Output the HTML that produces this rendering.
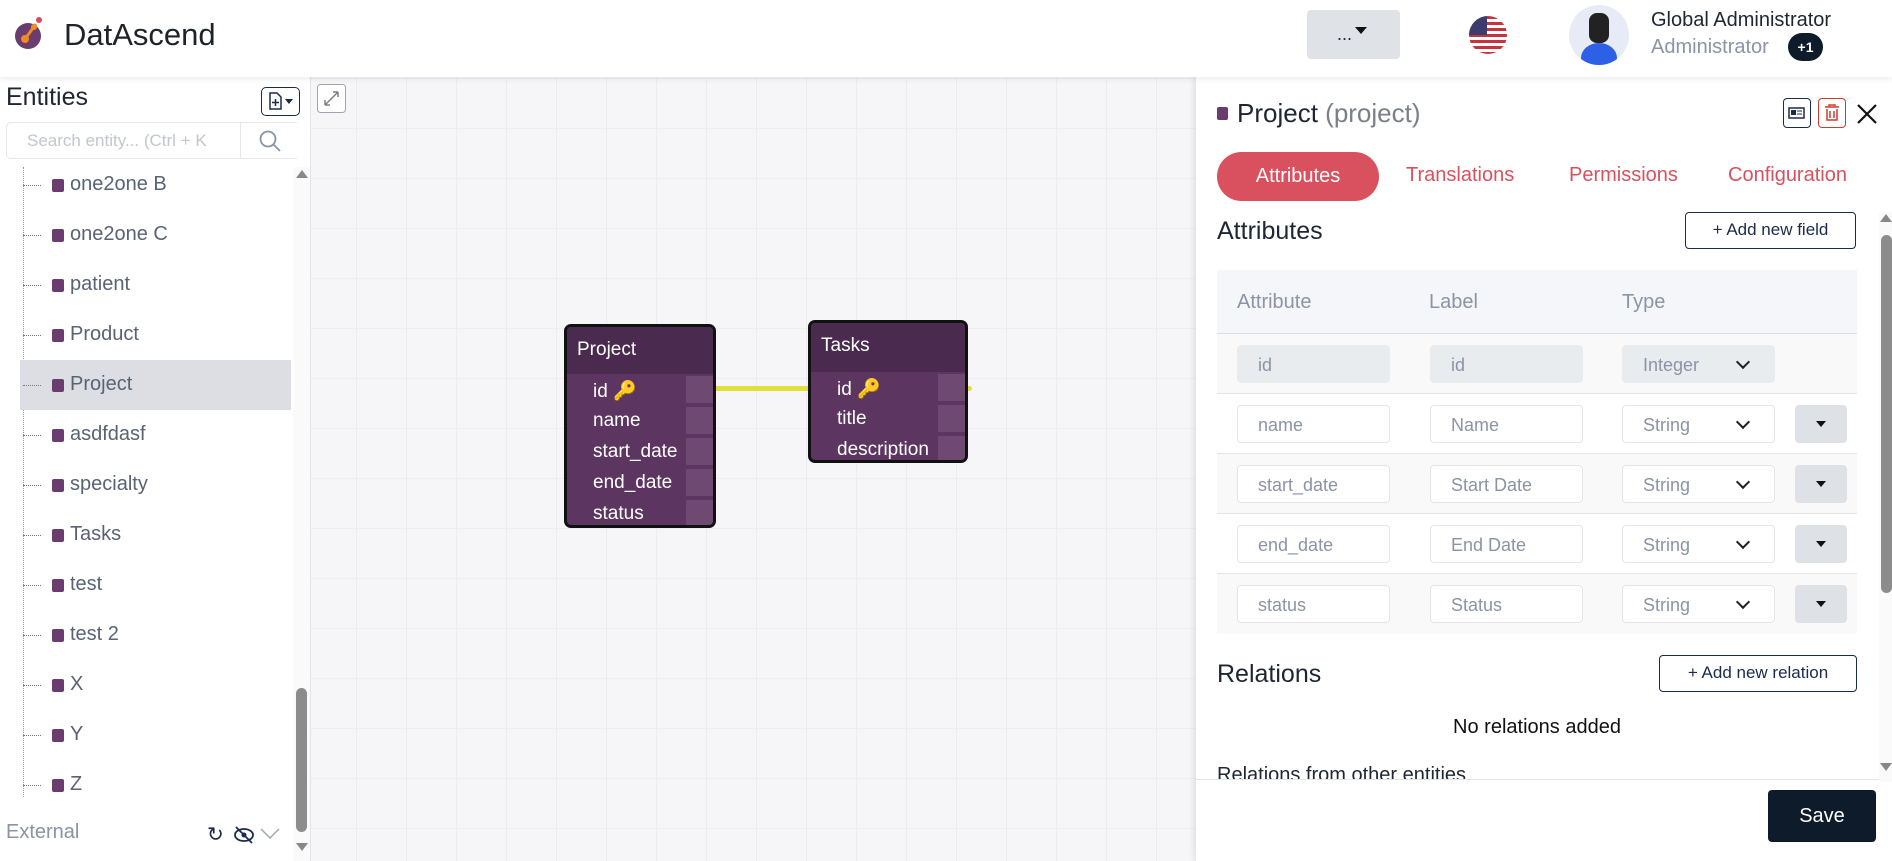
<!DOCTYPE html>
<html><head><meta charset="utf-8"><style>
*{box-sizing:border-box;margin:0;padding:0}
html,body{width:1892px;height:861px;overflow:hidden}
body{font-family:"Liberation Sans",sans-serif;background:#fff;position:relative;color:#1e2533}
.a{position:absolute}
.hdr{left:0;top:0;width:1892px;height:77px;background:#fff;box-shadow:0 2px 6px rgba(0,0,0,.08);z-index:5}
.canvas{left:311px;top:77px;width:885px;height:784px;background-color:#f6f6f9;background-image:linear-gradient(#efedf1 1px,transparent 1px),linear-gradient(90deg,#ececf0 1px,transparent 1px);background-size:50px 50px;background-position:45px 1px}
.side{left:0;top:77px;width:311px;height:784px;background:#fff;border-right:1px solid #e4e4e8;overflow:hidden}
.item{position:absolute;left:0;width:291px;height:50px;font-size:20px;color:#5a6374}
.item .sq{position:absolute;left:52px;top:19px;width:12px;height:13px;background:#6b3d6e;border-radius:2px}
.item .t{position:absolute;left:70px;top:13px}
.item .h{position:absolute;left:23px;top:25px;width:18px;border-top:1px dotted #777}
.node{position:absolute;background:#5c3560;border:3px solid #111;border-radius:7px;overflow:hidden;color:#fff;font-size:19px}
.node .hd{background:#4a2a4e;height:47px;padding:12px 0 0 10px}
.node .r{position:relative;height:31px;padding:5px 0 0 26px}
.node .c{position:absolute;right:0;top:2px;width:27px;height:27px;background:#6e4a72}
.panel{left:1196px;top:77px;width:696px;height:784px;background:#fff;box-shadow:-2px 0 6px rgba(0,0,0,.1)}
.tab{position:absolute;top:164px;font-size:20px;color:#d9505f}
.row{position:absolute;left:1217px;width:640px;height:60px;border-bottom:1px solid #e2e4e8}
.in{position:absolute;top:11px;width:153px;height:38px;border:1px solid #e3e5e9;border-radius:4px;background:#fff;font-size:18px;color:#8a94a6;padding:9px 0 0 20px}
.in.d{background:#e9ecef;border-color:#e9ecef}
.sel{position:absolute;left:405px;top:11px;width:153px;height:38px;border:1px solid #e3e5e9;border-radius:4px;background:#fff;font-size:18px;color:#8a94a6;padding:9px 0 0 20px}
.sel:after{content:"";position:absolute;right:26px;top:11px;width:8px;height:8px;border-right:2px solid #222;border-bottom:2px solid #222;transform:rotate(45deg)}
.dd{position:absolute;left:578px;top:11px;width:52px;height:38px;background:#dee1e6;border-radius:4px}
.dd:after{content:"";position:absolute;left:21px;top:16px;border-left:5px solid transparent;border-right:5px solid transparent;border-top:6px solid #111}
.btn{position:absolute;border:1.5px solid #1a2b4c;border-radius:4px;font-size:17px;color:#1a2b4c;text-align:center;background:#fff}
</style></head><body>
<div class="a hdr">
 <svg class="a" style="left:14px;top:16px" width="34" height="34" viewBox="0 0 34 34"><circle cx="14" cy="20" r="13" fill="#6b3d6e"/><circle cx="11" cy="23" r="4" fill="#f08a24"/><line x1="11" y1="23" x2="22" y2="8" stroke="#f08a24" stroke-width="3"/><circle cx="25" cy="4" r="3" fill="#e0465a"/><circle cx="20" cy="11" r="3" fill="#f08a24"/></svg>
 <div class="a" style="left:64px;top:17px;font-size:31px;color:#1e2229">DatAscend</div>
 <div class="a" style="left:1307px;top:10px;width:93px;height:49px;background:#dfe2e6;border-radius:4px;font-size:18px;padding:14px 0 0 30px">...<span style="display:inline-block;margin-left:3px;border-left:6px solid transparent;border-right:6px solid transparent;border-top:7px solid #111;vertical-align:6px"></span></div>
 <div class="a" style="left:1469px;top:16px;width:38px;height:38px;border-radius:50%;overflow:hidden;background:repeating-linear-gradient(#c8323e 0 3px,#fff 3px 6px)"><div style="width:18px;height:19px;background:#3c3b6e"></div></div>
 <div class="a" style="left:1569px;top:5px;width:60px;height:60px;border-radius:50%;background:#e6ebf5;overflow:hidden"><div class="a" style="left:20px;top:8px;width:20px;height:30px;background:#222;border-radius:8px"></div><div class="a" style="left:12px;top:38px;width:36px;height:30px;background:#2e60e6;border-radius:50%"></div></div>
 <div class="a" style="left:1651px;top:9px;font-size:20px;color:#1e2533">Global Administrator</div>
 <div class="a" style="left:1651px;top:36px;font-size:20px;color:#8a94a6">Administrator</div>
 <div class="a" style="left:1788px;top:33px;width:35px;height:28px;border-radius:14px;background:#0d1b2a;color:#fff;font-size:14px;font-weight:bold;text-align:center;line-height:28px">+1</div>
</div>
<div class="a canvas"></div>
<svg class="a" style="left:317px;top:84px" width="29" height="29"><rect x="0.5" y="0.5" width="28" height="28" rx="3" fill="#fff" stroke="#a0a4ac"/><path d="M8 21 L21 8 M8 21 h5 M8 21 v-5 M21 8 h-5 M21 8 v5" stroke="#7a808a" stroke-width="1.5" fill="none"/></svg>
<div class="a" style="left:716px;top:386px;width:94px;height:5px;background:#e0df3c"></div>
<div class="a" style="left:966px;top:386px;width:6px;height:5px;background:#e0df3c;border-radius:3px"></div>
<div class="node" style="left:564px;top:324px;width:152px;height:204px"><div class="hd">Project</div>
<div class="r">id <span style="color:#f0a030">🔑</span><div class="c"></div></div><div class="r">name<div class="c"></div></div><div class="r">start_date<div class="c"></div></div><div class="r">end_date<div class="c"></div></div><div class="r">status<div class="c"></div></div></div>
<div class="node" style="left:808px;top:320px;width:160px;height:143px"><div class="hd" style="height:49px">Tasks</div>
<div class="r">id <span style="color:#f0a030">🔑</span><div class="c"></div></div><div class="r">title<div class="c"></div></div><div class="r">description<div class="c"></div></div></div>

<div class="a side">
 <div class="a" style="left:6px;top:6px;font-size:25px;color:#1e2533">Entities</div>
 <div class="a" style="left:261px;top:10px;width:39px;height:29px;border:1.5px solid #1a2b4c;border-radius:5px"><svg width="36" height="26"><path d="M8 5 h7 l4 4 v12 h-11z" stroke="#1a2b4c" stroke-width="1.5" fill="none"/><path d="M13.5 11 v7 M10 14.5 h7" stroke="#1a2b4c" stroke-width="1.5"/><path d="M23 11 h8 l-4 5z" fill="#1a2b4c"/></svg></div>
 <div class="a" style="left:6px;top:45px;width:294px;height:37px;border:1px solid #e4e6ea;border-radius:5px"><span class="a" style="left:20px;top:8px;font-size:17px;color:#c2c6cd">Search entity... (Ctrl + K</span><div class="a" style="left:233px;top:0;width:60px;height:35px;border-left:1px solid #e4e6ea;background:#fff"><svg class="a" style="left:17px;top:6px" width="24" height="24"><circle cx="10" cy="10" r="7.5" stroke="#8a94a6" stroke-width="1.8" fill="none"/><line x1="15.5" y1="15.5" x2="22" y2="22" stroke="#8a94a6" stroke-width="1.8"/></svg></div></div>
 <div class="a" style="left:23px;top:90px;height:630px;border-left:1px dotted #999"></div>
 <div class="a" style="left:20px;top:283px;width:271px;height:50px;background:#dcdee3"></div>
 <div class="item" style="top:83px"><div class="h"></div><div class="sq"></div><div class="t">one2one B</div></div>
 <div class="item" style="top:133px"><div class="h"></div><div class="sq"></div><div class="t">one2one C</div></div>
 <div class="item" style="top:183px"><div class="h"></div><div class="sq"></div><div class="t">patient</div></div>
 <div class="item" style="top:233px"><div class="h"></div><div class="sq"></div><div class="t">Product</div></div>
 <div class="item" style="top:283px"><div class="h"></div><div class="sq"></div><div class="t">Project</div></div>
 <div class="item" style="top:333px"><div class="h"></div><div class="sq"></div><div class="t">asdfdasf</div></div>
 <div class="item" style="top:383px"><div class="h"></div><div class="sq"></div><div class="t">specialty</div></div>
 <div class="item" style="top:433px"><div class="h"></div><div class="sq"></div><div class="t">Tasks</div></div>
 <div class="item" style="top:483px"><div class="h"></div><div class="sq"></div><div class="t">test</div></div>
 <div class="item" style="top:533px"><div class="h"></div><div class="sq"></div><div class="t">test 2</div></div>
 <div class="item" style="top:583px"><div class="h"></div><div class="sq"></div><div class="t">X</div></div>
 <div class="item" style="top:633px"><div class="h"></div><div class="sq"></div><div class="t">Y</div></div>
 <div class="item" style="top:683px"><div class="h"></div><div class="sq"></div><div class="t">Z</div></div>
 <div class="a" style="left:0;top:733px;width:292px;height:51px;background:#fff"></div>
 <div class="a" style="left:6px;top:744px;font-size:20px;color:#8a94a6">External</div>
 <div class="a" style="left:207px;top:745px;font-size:20px;color:#1a2b4c">↻</div>
 <svg class="a" style="left:233px;top:748px" width="22" height="20"><ellipse cx="11" cy="10" rx="9" ry="6" stroke="#1a2b4c" stroke-width="1.8" fill="none"/><circle cx="11" cy="10" r="2.5" fill="#1a2b4c"/><line x1="3" y1="2" x2="19" y2="18" stroke="#1a2b4c" stroke-width="1.8"/></svg>
 <svg class="a" style="left:259px;top:750px" width="22" height="14"><path d="M2 2 L11 11 L20 2" stroke="#a0a6b0" stroke-width="1.5" fill="none"/></svg>
 <div class="a" style="left:293px;top:90px;width:18px;height:694px;background:#fafafa"></div>
 <div class="a" style="left:296px;top:93px;border-left:6px solid transparent;border-right:6px solid transparent;border-bottom:8px solid #888"></div>
 <div class="a" style="left:296px;top:611px;width:11px;height:144px;background:#8c8c8c;border-radius:6px"></div>
 <div class="a" style="left:296px;top:766px;border-left:6px solid transparent;border-right:6px solid transparent;border-top:8px solid #888"></div>
</div>

<div class="a panel"></div>
<div class="a" style="left:1217px;top:107px;width:11px;height:13px;background:#6b3d6e;border-radius:2px"></div>
<div class="a" style="left:1237px;top:98px;font-size:26px;color:#1e2533">Project <span style="color:#7a7f88">(project)</span></div>
<div class="a" style="left:1783px;top:98px;width:28px;height:30px;border:1.5px solid #1a2b4c;border-radius:4px"><svg width="26" height="28"><rect x="5" y="9" width="15" height="10" stroke="#1a2b4c" stroke-width="1.5" fill="none"/><rect x="7" y="11" width="5" height="5" fill="#1a2b4c"/><line x1="13" y1="12" x2="18" y2="12" stroke="#1a2b4c"/><line x1="13" y1="15" x2="18" y2="15" stroke="#1a2b4c"/></svg></div>
<div class="a" style="left:1818px;top:98px;width:28px;height:30px;border:1.5px solid #d23b2e;border-radius:4px"><svg width="26" height="28"><path d="M6 8 h14 M10 8 v-2 h6 v2 M8 10 v11 h10 v-11 M11 12 v7 M15 12 v7" stroke="#d23b2e" stroke-width="1.5" fill="none"/></svg></div>
<svg class="a" style="left:1856px;top:103px" width="22" height="22"><path d="M2 2 L20 20 M20 2 L2 20" stroke="#111" stroke-width="2.2"/></svg>
<div class="a" style="left:1217px;top:152px;width:162px;height:49px;border-radius:25px;background:#d9505f;color:#fff;font-size:20px;text-align:center;line-height:49px">Attributes</div>
<div class="tab" style="left:1406px">Translations</div>
<div class="tab" style="left:1569px">Permissions</div>
<div class="tab" style="left:1728px">Configuration</div>
<div class="a" style="left:1217px;top:217px;font-size:25px;color:#1e2533">Attributes</div>
<div class="btn" style="left:1685px;top:212px;width:171px;height:37px;line-height:34px">+ Add new field</div>
<div class="a" style="left:1217px;top:270px;width:640px;height:64px;background:#f5f6fa;border-bottom:1px solid #dcdee3"></div>
<div class="a" style="left:1237px;top:291px;font-size:20px;color:#8a94a6">Attribute</div>
<div class="a" style="left:1429px;top:291px;font-size:20px;color:#8a94a6">Label</div>
<div class="a" style="left:1622px;top:291px;font-size:20px;color:#8a94a6">Type</div>
<div class="row" style="top:334px;background:#f9f9fa"><div class="in d" style="left:20px">id</div><div class="in d" style="left:213px">id</div><div class="sel" style="background:#e9ecef;border-color:#e9ecef">Integer</div></div>
<div class="row" style="top:394px;background:#fff"><div class="in" style="left:20px">name</div><div class="in" style="left:213px">Name</div><div class="sel">String</div><div class="dd"></div></div>
<div class="row" style="top:454px;background:#f9f9fa"><div class="in" style="left:20px">start_date</div><div class="in" style="left:213px">Start Date</div><div class="sel">String</div><div class="dd"></div></div>
<div class="row" style="top:514px;background:#fff"><div class="in" style="left:20px">end_date</div><div class="in" style="left:213px">End Date</div><div class="sel">String</div><div class="dd"></div></div>
<div class="row" style="top:574px;background:#f9f9fa;border-bottom:none"><div class="in" style="left:20px">status</div><div class="in" style="left:213px">Status</div><div class="sel">String</div><div class="dd"></div></div>
<div class="a" style="left:1217px;top:660px;font-size:25px;color:#1e2533">Relations</div>
<div class="btn" style="left:1659px;top:655px;width:198px;height:37px;line-height:34px">+ Add new relation</div>
<div class="a" style="left:1427px;top:716px;width:220px;text-align:center;font-size:20px;color:#111">No relations added</div>
<div class="a" style="left:1217px;top:763px;height:16px;overflow:hidden;font-size:20px;color:#1e2533;line-height:24px">Relations from other entities</div>
<div class="a" style="left:1196px;top:779px;width:684px;border-top:1px solid #e2e4e8"></div>
<div class="a" style="left:1768px;top:790px;width:108px;height:52px;background:#0d1b2a;border-radius:4px;color:#fff;font-size:20px;text-align:center;line-height:52px">Save</div>
<div class="a" style="left:1879px;top:212px;width:13px;height:570px;background:#fafafa"></div>
<div class="a" style="left:1880px;top:214px;border-left:6px solid transparent;border-right:6px solid transparent;border-bottom:8px solid #888"></div>
<div class="a" style="left:1881px;top:235px;width:11px;height:358px;background:#8c8c8c;border-radius:6px"></div>
<div class="a" style="left:1880px;top:763px;border-left:6px solid transparent;border-right:6px solid transparent;border-top:8px solid #888"></div>
</body></html>
